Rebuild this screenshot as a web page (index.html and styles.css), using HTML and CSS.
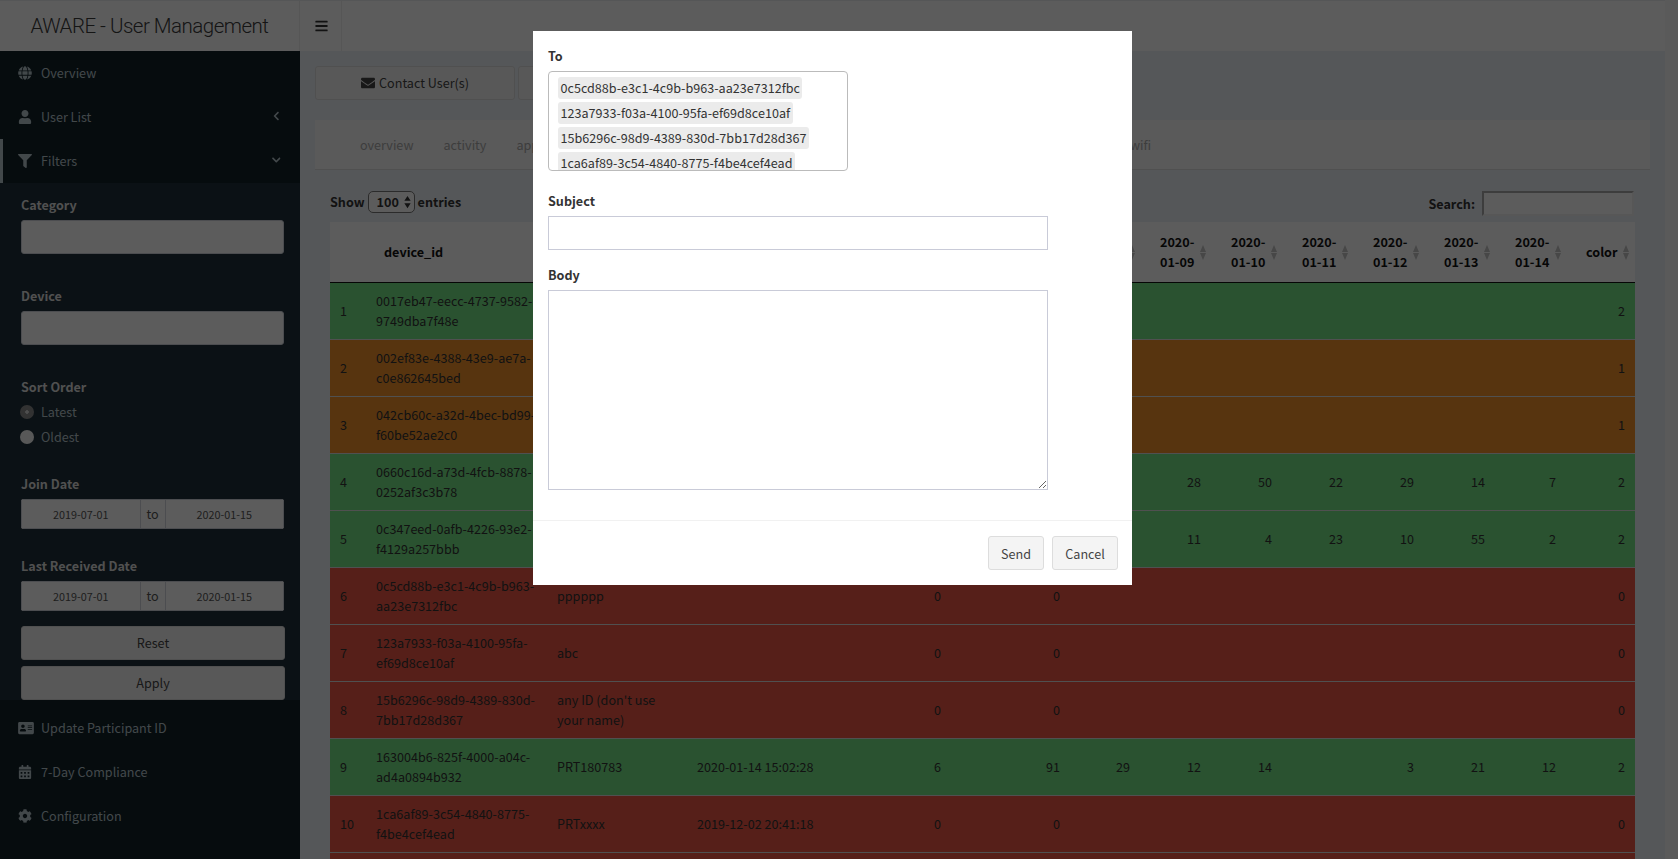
FILE: index.html
```html
<!DOCTYPE html>
<html lang="en">
<head>
<meta charset="utf-8">
<title>AWARE - User Management</title>
<link rel="stylesheet" href="styles.css">
</head>
<body>
<svg class="defs" aria-hidden="true">
  <symbol id="i-bars" viewBox="0 0 448 512"><path d="M16 132h416c8.837 0 16-7.163 16-16V76c0-8.837-7.163-16-16-16H16C7.163 60 0 67.163 0 76v40c0 8.837 7.163 16 16 16zm0 160h416c8.837 0 16-7.163 16-16v-40c0-8.837-7.163-16-16-16H16c-8.837 0-16 7.163-16 16v40c0 8.837 7.163 16 16 16zm0 160h416c8.837 0 16-7.163 16-16v-40c0-8.837-7.163-16-16-16H16c-8.837 0-16 7.163-16 16v40c0 8.837 7.163 16 16 16z"/></symbol>
  <symbol id="i-envelope" viewBox="0 0 512 512"><path d="M502.3 190.8c3.9-3.1 9.7-.2 9.7 4.7V400c0 26.5-21.5 48-48 48H48c-26.5 0-48-21.5-48-48V195.6c0-5 5.7-7.8 9.7-4.7 22.4 17.4 52.1 39.5 154.1 113.6 21.1 15.4 56.7 47.8 92.2 47.6 35.7.3 72-32.8 92.3-47.6 102-74.1 131.6-96.3 154-113.7zM256 320c23.2.4 56.6-29.2 73.4-41.4 132.7-96.3 142.8-104.7 173.4-128.7 5.8-4.5 9.2-11.5 9.2-18.9v-19c0-26.5-21.5-48-48-48H48C21.5 64 0 85.5 0 112v19c0 7.4 3.4 14.3 9.2 18.9 30.6 23.9 40.7 32.4 173.4 128.7 16.8 12.2 50.2 41.8 73.4 41.4z"/></symbol>
  <symbol id="i-user" viewBox="0 0 448 512"><path d="M224 256c70.7 0 128-57.3 128-128S294.7 0 224 0 96 57.3 96 128s57.3 128 128 128zm89.6 32h-16.7c-22.2 10.2-46.9 16-72.9 16s-50.6-5.8-72.9-16h-16.7C60.2 288 0 348.2 0 422.4V464c0 26.5 21.5 48 48 48h352c26.5 0 48-21.5 48-48v-41.6c0-74.2-60.2-134.4-134.4-134.4z"/></symbol>
  <symbol id="i-filter" viewBox="0 0 512 512"><path d="M487.976 0H24.028C2.71 0-8.047 25.866 7.058 40.971L192 225.941V432c0 7.831 3.821 15.17 10.237 19.662l80 55.98C298.02 518.69 320 507.493 320 487.98V225.941l184.947-184.97C520.021 25.896 509.338 0 487.976 0z"/></symbol>
  <symbol id="i-left" viewBox="0 0 320 512"><path d="M34.52 239.03L228.87 44.69c9.37-9.37 24.57-9.37 33.94 0l22.67 22.67c9.36 9.36 9.37 24.52.04 33.9L131.49 256l154.02 154.75c9.34 9.38 9.32 24.54-.04 33.9l-22.67 22.67c-9.37 9.37-24.57 9.37-33.94 0L34.52 272.97c-9.37-9.37-9.37-24.57 0-33.94z"/></symbol>
  <symbol id="i-down" viewBox="0 0 448 512"><path d="M207.029 381.476L12.686 187.132c-9.373-9.373-9.373-24.569 0-33.941l22.667-22.667c9.357-9.357 24.522-9.375 33.901-.04L224 284.505l154.745-154.021c9.379-9.335 24.544-9.317 33.901.04l22.667 22.667c9.373 9.373 9.373 24.569 0 33.941L240.971 381.476c-9.373 9.372-24.569 9.372-33.942 0z"/></symbol>
  <symbol id="i-cog" viewBox="0 0 512 512"><path d="M487.4 315.7l-42.6-24.6c4.3-23.2 4.3-47 0-70.2l42.6-24.6c4.9-2.8 7.1-8.6 5.5-14-11.1-35.6-30-67.8-54.7-94.6-3.8-4.1-10-5.1-14.8-2.3L380.8 110c-17.9-15.4-38.5-27.3-60.8-35.1V25.8c0-5.6-3.9-10.5-9.4-11.7-36.7-8.2-74.3-7.8-109.2 0-5.5 1.2-9.4 6.1-9.4 11.7V75c-22.2 7.9-42.8 19.8-60.8 35.1L88.7 85.5c-4.9-2.8-11-1.9-14.8 2.3-24.7 26.7-43.6 58.9-54.7 94.6-1.7 5.4.6 11.2 5.5 14L67.3 221c-4.3 23.2-4.3 47 0 70.2l-42.6 24.6c-4.9 2.8-7.1 8.6-5.5 14 11.1 35.6 30 67.8 54.7 94.6 3.8 4.1 10 5.1 14.8 2.3l42.6-24.6c17.9 15.4 38.5 27.3 60.8 35.1v49.2c0 5.6 3.9 10.5 9.4 11.7 36.7 8.2 74.3 7.8 109.2 0 5.5-1.2 9.4-6.1 9.4-11.7v-49.2c22.2-7.9 42.8-19.8 60.8-35.1l42.6 24.6c4.9 2.8 11 1.9 14.8-2.3 24.7-26.7 43.6-58.9 54.7-94.6 1.5-5.5-.7-11.3-5.6-14.1zM256 336c-44.1 0-80-35.9-80-80s35.9-80 80-80 80 35.9 80 80-35.9 80-80 80z"/></symbol>
  <symbol id="i-card" viewBox="0 0 576 512"><path d="M528 32H48C21.5 32 0 53.5 0 80v352c0 26.5 21.5 48 48 48h480c26.5 0 48-21.5 48-48V80c0-26.5-21.5-48-48-48zm-352 96c35.3 0 64 28.7 64 64s-28.7 64-64 64-64-28.7-64-64 28.7-64 64-64zm112 236.8c0 10.6-10 19.2-22.4 19.2H86.4C74 384 64 375.4 64 364.8v-19.2c0-31.8 30.1-57.6 67.2-57.6h5c12.3 5.1 25.7 8 39.8 8s27.6-2.9 39.8-8h5c37.1 0 67.2 25.8 67.2 57.6v19.2zM512 312c0 4.4-3.6 8-8 8H360c-4.4 0-8-3.6-8-8v-16c0-4.4 3.6-8 8-8h144c4.4 0 8 3.6 8 8v16zm0-64c0 4.4-3.6 8-8 8H360c-4.4 0-8-3.6-8-8v-16c0-4.4 3.6-8 8-8h144c4.4 0 8 3.6 8 8v16zm0-64c0 4.4-3.6 8-8 8H360c-4.4 0-8-3.6-8-8v-16c0-4.4 3.6-8 8-8h144c4.4 0 8 3.6 8 8v16z"/></symbol>
  <symbol id="i-cal" viewBox="0 0 448 512"><path d="M0 464c0 26.5 21.5 48 48 48h352c26.5 0 48-21.5 48-48V192H0v272zm320-196c0-6.6 5.4-12 12-12h40c6.6 0 12 5.4 12 12v40c0 6.6-5.4 12-12 12h-40c-6.6 0-12-5.4-12-12v-40zm0 128c0-6.6 5.4-12 12-12h40c6.6 0 12 5.4 12 12v40c0 6.6-5.4 12-12 12h-40c-6.6 0-12-5.4-12-12v-40zM192 268c0-6.6 5.4-12 12-12h40c6.6 0 12 5.4 12 12v40c0 6.6-5.4 12-12 12h-40c-6.6 0-12-5.4-12-12v-40zm0 128c0-6.6 5.4-12 12-12h40c6.6 0 12 5.4 12 12v40c0 6.6-5.4 12-12 12h-40c-6.6 0-12-5.4-12-12v-40zM64 268c0-6.6 5.4-12 12-12h40c6.6 0 12 5.4 12 12v40c0 6.6-5.4 12-12 12H76c-6.6 0-12-5.4-12-12v-40zm0 128c0-6.6 5.4-12 12-12h40c6.6 0 12 5.4 12 12v40c0 6.6-5.4 12-12 12H76c-6.6 0-12-5.4-12-12v-40zM400 64h-48V16c0-8.8-7.2-16-16-16h-32c-8.8 0-16 7.2-16 16v48H160V16c0-8.8-7.2-16-16-16h-32c-8.8 0-16 7.2-16 16v48H48C21.5 64 0 85.5 0 112v48h448v-48c0-26.5-21.5-48-48-48z"/></symbol>
  <symbol id="i-globe" viewBox="0 0 496 512"><path d="M336.5 160C322 70.7 287.8 8 248 8s-74 62.7-88.5 152h177zM152 256c0 22.2 1.2 43.5 3.3 64h185.3c2.1-20.5 3.3-41.8 3.3-64s-1.2-43.5-3.3-64H155.3c-2.1 20.5-3.3 41.8-3.3 64zm324.7-96c-28.6-67.9-86.5-120.4-158-141.6 24.4 33.8 41.2 84.7 50 141.6h108zM177.2 18.4C105.8 39.6 47.8 92.1 19.3 160h108c8.7-56.9 25.5-107.8 49.9-141.6zM487.4 192H372.7c2.1 21 3.3 42.5 3.3 64s-1.2 43-3.3 64h114.6c5.5-20.5 8.6-41.8 8.6-64s-3.1-43.5-8.5-64zM120 256c0-21.5 1.2-43 3.3-64H8.6C3.2 212.5 0 233.8 0 256s3.2 43.5 8.6 64h114.6c-2-21-3.2-42.5-3.2-64zm39.5 96c14.5 89.3 48.7 152 88.5 152s74-62.7 88.5-152h-177zm159.3 141.6c71.4-21.2 129.4-73.7 158-141.6h-108c-8.8 56.9-25.6 107.8-50 141.6zM19.3 352c28.6 67.9 86.5 120.4 158 141.6-24.4-33.8-41.2-84.7-50-141.6h-108z"/></symbol>
</svg>

<div class="app">
  <header class="topbar">
    <div class="brand">AWARE - User Management</div>
    <div class="toggle"><svg class="ico ico-bars"><use href="#i-bars"/></svg></div>
  </header>
  <div class="main">
    <aside class="sidebar">
      <a class="item"><span class="item-ico"><svg class="ico"><use href="#i-globe"/></svg></span>Overview</a>
      <a class="item"><span class="item-ico"><svg class="ico"><use href="#i-user"/></svg></span>User List<svg class="ico chev-left"><use href="#i-left"/></svg></a>
      <a class="item item-active"><span class="item-ico"><svg class="ico"><use href="#i-filter"/></svg></span>Filters<svg class="ico chev-down"><use href="#i-down"/></svg></a>
      <form class="panel">
        <div class="group group-select">
          <label class="flabel">Category</label>
          <input class="finput" type="text">
        </div>
        <div class="group group-select">
          <label class="flabel">Device</label>
          <input class="finput" type="text">
        </div>
        <div class="group group-radio">
          <label class="flabel flabel-tight">Sort Order</label>
          <label class="radio"><input class="radio-on" type="radio" name="sort" checked>Latest</label>
          <label class="radio"><input class="radio-off" type="radio" name="sort">Oldest</label>
        </div>
        <div class="group group-date">
          <label class="flabel">Join Date</label>
          <div class="daterange"><input class="dateinput" type="text" value="2019-07-01"><span class="dateto">to</span><input class="dateinput" type="text" value="2020-01-15"></div>
        </div>
        <div class="group group-last">
          <label class="flabel">Last Received Date</label>
          <div class="daterange"><input class="dateinput" type="text" value="2019-07-01"><span class="dateto">to</span><input class="dateinput" type="text" value="2020-01-15"></div>
        </div>
        <button class="fbtn fbtn-reset" type="button"><span class="lift">Reset</span></button>
        <button class="fbtn" type="button"><span class="lift">Apply</span></button>
      </form>
      <a class="item"><span class="item-ico"><svg class="ico ico-card"><use href="#i-card"/></svg></span>Update Participant ID</a>
      <a class="item"><span class="item-ico"><svg class="ico"><use href="#i-cal"/></svg></span>7-Day Compliance</a>
      <a class="item"><span class="item-ico"><svg class="ico"><use href="#i-cog"/></svg></span>Configuration</a>
    </aside>
    <main class="content">
      <div class="actions">
        <button class="act" type="button"><svg class="ico act-ico"><use href="#i-envelope"/></svg><span class="lift">Contact User(s)</span></button>
        <button class="act" type="button"></button>
      </div>
      <nav class="tabs">
        <a class="tab">overview</a><a class="tab">activity</a><a class="tab">app</a><a class="tab tab-end">wifi</a>
      </nav>
      <section class="dt">
        <div class="dt-top">
          <div class="dt-length">Show <span class="lenwrap"><select class="lensel"><option>100</option></select><svg class="lenarrows" viewBox="0 0 8 14"><path d="M4 0l3.6 5.5H.4zM4 14L.4 8.5h7.2z"/></svg></span> entries</div>
          <div class="dt-search"><label class="dt-search-label">Search:</label><input class="dt-search-input" type="search"></div>
        </div>
        <table class="grid">
          <colgroup><col class="c-n"><col class="c-dev"><col class="c-name"><col class="c-date"><col class="c-a"><col class="c-b"><col class="c-c"><col class="c-d"><col class="c-d"><col class="c-d"><col class="c-d"><col class="c-d"><col class="c-d"><col class="c-color"></colgroup>
          <thead>
            <tr><th></th><th class="th-dev">device_id</th><th class="sort"></th><th class="sort"></th><th class="sort"></th><th class="sort"></th><th class="sort"></th><th class="sort">2020-<br>01-09</th><th class="sort">2020-<br>01-10</th><th class="sort">2020-<br>01-11</th><th class="sort">2020-<br>01-12</th><th class="sort">2020-<br>01-13</th><th class="sort">2020-<br>01-14</th><th class="sort sort-color">color</th></tr>
          </thead>
          <tbody>
            <tr class="g"><td>1</td><td>0017eb47-eecc-4737-9582-<br>9749dba7f48e</td><td></td><td></td><td class="num"></td><td class="num"></td><td class="num"></td><td class="num"></td><td class="num"></td><td class="num"></td><td class="num"></td><td class="num"></td><td class="num"></td><td class="last">2</td></tr>
            <tr class="o"><td>2</td><td>002ef83e-4388-43e9-ae7a-<br>c0e862645bed</td><td></td><td></td><td class="num"></td><td class="num"></td><td class="num"></td><td class="num"></td><td class="num"></td><td class="num"></td><td class="num"></td><td class="num"></td><td class="num"></td><td class="last">1</td></tr>
            <tr class="o"><td>3</td><td>042cb60c-a32d-4bec-bd99-<br>f60be52ae2c0</td><td></td><td></td><td class="num"></td><td class="num"></td><td class="num"></td><td class="num"></td><td class="num"></td><td class="num"></td><td class="num"></td><td class="num"></td><td class="num"></td><td class="last">1</td></tr>
            <tr class="g"><td>4</td><td>0660c16d-a73d-4fcb-8878-<br>0252af3c3b78</td><td></td><td></td><td class="num"></td><td class="num"></td><td class="num"></td><td class="num">28</td><td class="num">50</td><td class="num">22</td><td class="num">29</td><td class="num">14</td><td class="num">7</td><td class="last">2</td></tr>
            <tr class="g"><td>5</td><td>0c347eed-0afb-4226-93e2-<br>f4129a257bbb</td><td></td><td></td><td class="num"></td><td class="num"></td><td class="num"></td><td class="num">11</td><td class="num">4</td><td class="num">23</td><td class="num">10</td><td class="num">55</td><td class="num">2</td><td class="last">2</td></tr>
            <tr class="r"><td>6</td><td>0c5cd88b-e3c1-4c9b-b963-<br>aa23e7312fbc</td><td>pppppp</td><td></td><td class="num">0</td><td class="num">0</td><td class="num"></td><td class="num"></td><td class="num"></td><td class="num"></td><td class="num"></td><td class="num"></td><td class="num"></td><td class="last">0</td></tr>
            <tr class="r"><td>7</td><td>123a7933-f03a-4100-95fa-<br>ef69d8ce10af</td><td>abc</td><td></td><td class="num">0</td><td class="num">0</td><td class="num"></td><td class="num"></td><td class="num"></td><td class="num"></td><td class="num"></td><td class="num"></td><td class="num"></td><td class="last">0</td></tr>
            <tr class="r"><td>8</td><td>15b6296c-98d9-4389-830d-<br>7bb17d28d367</td><td>any ID (don't use<br>your name)</td><td></td><td class="num">0</td><td class="num">0</td><td class="num"></td><td class="num"></td><td class="num"></td><td class="num"></td><td class="num"></td><td class="num"></td><td class="num"></td><td class="last">0</td></tr>
            <tr class="g"><td>9</td><td>163004b6-825f-4000-a04c-<br>ad4a0894b932</td><td>PRT180783</td><td>2020-01-14 15:02:28</td><td class="num">6</td><td class="num">91</td><td class="num">29</td><td class="num">12</td><td class="num">14</td><td class="num"></td><td class="num">3</td><td class="num">21</td><td class="num">12</td><td class="last">2</td></tr>
            <tr class="r"><td>10</td><td>1ca6af89-3c54-4840-8775-<br>f4be4cef4ead</td><td>PRTxxxx</td><td>2019-12-02 20:41:18</td><td class="num">0</td><td class="num">0</td><td class="num"></td><td class="num"></td><td class="num"></td><td class="num"></td><td class="num"></td><td class="num"></td><td class="num"></td><td class="last">0</td></tr>
            <tr class="r"><td colspan="14"><br><br></td></tr>
          </tbody>
        </table>
      </section>
    </main>
  </div>
</div>
<div class="track"></div>

<div class="backdrop"></div>
<div class="modal-wrap">
  <div class="modal">
    <div class="modal-body">
      <label class="mlabel mlabel-to">To</label>
      <div class="tolist">
        <span class="pill">0c5cd88b-e3c1-4c9b-b963-aa23e7312fbc</span>
        <span class="pill">123a7933-f03a-4100-95fa-ef69d8ce10af</span>
        <span class="pill">15b6296c-98d9-4389-830d-7bb17d28d367</span>
        <span class="pill">1ca6af89-3c54-4840-8775-f4be4cef4ead</span>
      </div>
      <label class="mlabel mlabel-subject">Subject</label>
      <input class="minput" type="text">
      <label class="mlabel mlabel-body">Body</label>
      <textarea class="marea"></textarea>
    </div>
    <div class="modal-foot">
      <button class="mbtn mbtn-send" type="button">Send</button>
      <button class="mbtn mbtn-cancel" type="button">Cancel</button>
    </div>
  </div>
</div>
</body>
</html>
```

FILE: styles.css
```css
* { box-sizing: border-box; }
html, body { margin: 0; height: 100%; overflow: hidden; }
body {
  display: flex;
  font-family: "Noto Sans CJK SC", "Noto Sans", sans-serif;
  font-size: 12.6px;
  line-height: 20px;
  color: #333;
  background: #ecf0f5;
}
button, input, select, textarea { font-family: inherit; }
.defs { display: none; }
.ico { display: block; width: 14px; height: 14px; fill: currentColor; flex: none; }
.lift { display: block; margin-top: -1px; }

.app { flex: 1; min-width: 0; display: flex; flex-direction: column; border-top: 1px solid #ecedf0; }
.track { width: 13px; flex: none; background: #fafafa; }

.topbar { height: 50px; flex: none; display: flex; background: #fff; }
.brand {
  width: 300px; flex: none; text-align: center;
  font-family: Roboto, "Liberation Sans", sans-serif; font-weight: 300;
  font-size: 20.5px; letter-spacing: -0.5px; line-height: 50px; color: #3a3a3a;
  border-right: 1px solid #eee;
}
.toggle { width: 42px; flex: none; border-right: 1px solid #eee; display: flex; align-items: center; padding-left: 15px; color: #333; }
.ico-bars { width: 13px; }

.main { flex: 1; min-height: 0; display: flex; }
.sidebar { width: 300px; flex: none; background: #122229; color: #b8c7ce; }
.item { display: flex; align-items: center; height: 44px; padding-left: 18px; }
.item-ico { width: 23px; flex: none; }
.item-active { box-shadow: inset 3px 0 0 #b8c7ce; }
.chev-left { width: 6.5px; height: 10px; margin-left: auto; margin-right: 20.5px; margin-top: -3px; }
.chev-down { width: 8.6px; height: 10px; margin-left: auto; margin-right: 19px; margin-top: -3px; }
.ico-card { width: 16px; }

.panel { background: #20303a; padding: 12px 15px 0 21px; margin-bottom: 6px; }
.group { display: block; }
.group-select { height: 91px; }
.group-radio { height: 97px; }
.group-date { height: 82px; }
.group-last { height: 70px; }
.flabel { display: block; font-weight: 700; color: #ddd; margin-bottom: 5px; width: 263px; }
.flabel-tight { margin-bottom: 2px; }
.finput { display: block; width: 263px; height: 34px; border: 1px solid #d2d6de; border-radius: 3px; background: #fff; }
.radio { display: flex; align-items: center; height: 25px; margin-left: -1px; color: #b8c7ce; }
.radio input { appearance: none; width: 14px; height: 14px; border-radius: 50%; margin: 0 7px 0 0; flex: none; }
.radio-on { background: radial-gradient(circle, #d8d8d8 0 1.5px, #8c8c8c 2px); }
.radio-off { background: #f4f4f4; }
.daterange { display: flex; width: 263px; height: 30px; border-radius: 3px; overflow: hidden; background: #fff; }
.dateinput { flex: 1; min-width: 0; width: 0; border: 1px solid #d2d6de; background: #fff; text-align: center; font-size: 10.8px; color: #555; padding: 0; }
.dateto { width: 24px; flex: none; text-align: center; line-height: 28px; background: #fff; border-top: 1px solid #d2d6de; border-bottom: 1px solid #d2d6de; color: #555; font-size: 12.6px; }
.fbtn { display: block; width: 264px; height: 34px; padding: 0; border: 1px solid #ddd; border-radius: 3px; background: #f4f4f4; color: #444; font-size: 12.6px; }
.fbtn-reset { margin-bottom: 6px; }

.content { flex: 1; min-width: 0; padding: 15px 15px 0; background: #ecf0f5; }
.actions { display: flex; gap: 3px; }
.act {
  width: 200px; height: 34px; padding: 0; display: flex; align-items: center; justify-content: center;
  border: 1px solid #ddd; border-radius: 3px; background: #f4f4f4; color: #444; font-size: 12.6px;
}
.act-ico { margin-right: 4px; }
.tabs { display: flex; height: 50px; margin-top: 20px; padding: 0 484px 0 30px; align-items: center; background: #f9f9f9; border-bottom: 1px solid #ddd; color: #aaa; white-space: nowrap; }
.tab { padding: 0 15px; }
.tab-end { margin-left: auto; }

.dt { padding: 21px 15px 0; }
.dt-top { display: flex; justify-content: space-between; height: 31px; font-weight: 700; color: #333; }
.dt-length { display: flex; align-items: center; height: 22px; gap: 3px; }
.lenwrap { position: relative; display: block; }
.lensel { appearance: none; display: block; width: 47px; height: 22px; padding: 0 0 0 8px; border: 1px solid #777; border-radius: 5px; background: #fff; font-size: 12.6px; font-weight: 700; color: #333; line-height: 20px; }
.lenarrows { position: absolute; right: 4px; top: 4px; width: 7px; height: 14px; fill: #333; }
.dt-search { display: flex; align-items: flex-start; gap: 7px; margin-right: 1px; }
.dt-search-label { line-height: 26px; }
.dt-search-input { width: 152px; height: 25px; border: 2px solid; border-color: #aaa #f2f2f2 #f2f2f2 #aaa; background: #fff; padding: 0; }

.grid { width: 1305px; table-layout: fixed; border-collapse: collapse; }
.c-n { width: 36px; } .c-dev { width: 181px; } .c-name { width: 140px; } .c-date { width: 190px; }
.c-a { width: 84px; } .c-b { width: 119px; } .c-c { width: 70px; } .c-d { width: 71px; } .c-color { width: 59px; }
.grid th { position: relative; height: 60px; padding: 10px 0 10px 10px; text-align: left; font-weight: 700; color: #111; background: #fff; border-bottom: 1px solid #111; white-space: nowrap; }
.grid th.th-dev { padding-left: 18px; }
.sort::before, .sort::after { content: ""; position: absolute; right: 15px; border-left: 3.7px solid transparent; border-right: 3.7px solid transparent; }
.sort::before { top: 23px; border-bottom: 7px solid #c5c5c5; }
.sort::after { top: 31px; border-top: 7px solid #c5c5c5; }
.sort-color::before, .sort-color::after { right: 6px; }
.grid td { padding: 8px 0 8px 10px; border-bottom: 1px solid #ddd; color: #333; vertical-align: middle; white-space: nowrap; }
.grid td.num { text-align: right; padding: 8px 20px 8px 0; }
.grid td.last { text-align: right; padding: 8px 10px 8px 0; }
.g td { background: #75e486; }
.o td { background: #f2902c; }
.r td { background: #ef5645; }

.backdrop { position: fixed; inset: 0; background: rgba(0,0,0,.64); }
.modal-wrap { position: fixed; top: 31px; left: 0; right: 13px; display: flex; justify-content: center; }
.modal { width: 599px; height: 554px; background: #fff; color: #333; }
.modal-body { height: 489px; padding: 15px 15px 0; }
.mlabel { display: block; font-weight: 700; color: #333; }
.mlabel-to { margin-bottom: 5px; }
.tolist { width: 300px; height: 100px; padding: 5px 9px 0; border: 1px solid #bbb; border-radius: 4px; overflow: hidden; display: flex; flex-direction: column; align-items: flex-start; gap: 3px; }
.pill { flex: none; height: 22px; line-height: 22px; padding: 0 2.5px; background: #ebebeb; border-radius: 3px; white-space: nowrap; }
.mlabel-subject { margin-top: 20px; margin-bottom: 5px; }
.minput { display: block; width: 500px; height: 34px; border: 1px solid #c9cbd8; border-radius: 0; background: #fff; }
.mlabel-body { margin-top: 15px; margin-bottom: 5px; }
.marea { display: block; width: 500px; height: 200px; border: 1px solid #c9cbd8; border-radius: 0; background: #fff; resize: vertical; }
.modal-foot { display: flex; justify-content: flex-end; gap: 8px; padding: 15px 14px 15px 15px; border-top: 1px solid #f1f1f1; }
.mbtn { height: 34px; padding: 0; border: 1px solid #ddd; border-radius: 3px; background: #f4f4f4; color: #444; font-size: 12.6px; }
.mbtn-send { width: 56px; }
.mbtn-cancel { width: 66px; }
```
